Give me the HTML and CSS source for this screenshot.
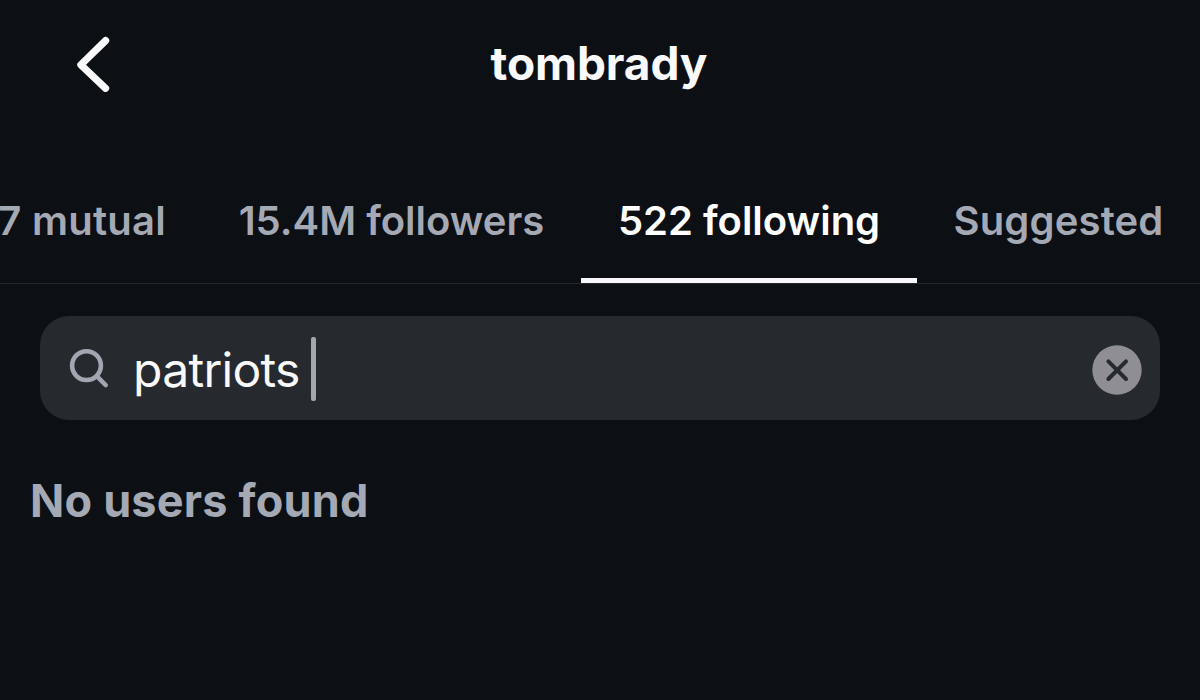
FILE: index.html
```html
<!DOCTYPE html>
<html lang="en">
<head>
<meta charset="utf-8">
<title>tombrady</title>
<link rel="stylesheet" href="styles.css">
</head>
<body>
<header class="header">
  <button class="back" aria-label="Back">
    <svg width="34" height="56" viewBox="0 0 34 56"><path d="M29.6 4.6 4.9 28.8 29.6 52.3" fill="none" stroke="currentColor" stroke-width="7.2" stroke-linecap="round" stroke-linejoin="round"/></svg>
  </button>
  <h1 class="title">tombrady</h1>
</header>
<nav class="tabs">
  <a class="tab tab-mutual">7 mutual</a>
  <a class="tab tab-followers">15.4M followers</a>
  <a class="tab tab-following active">522 following</a>
  <a class="tab tab-suggested">Suggested</a>
</nav>
<main>
  <div class="search">
    <svg class="search-icon" width="40" height="40" viewBox="0 0 40 40"><g fill="none" stroke="currentColor" stroke-width="4.6" stroke-linecap="round"><circle cx="17.5" cy="17.6" r="14.4"/><path d="M28 28.3 36.6 37"/></g></svg>
    <span class="query">patriots</span>
    <span class="caret"></span>
    <button class="clear" aria-label="Clear search">
      <svg width="50" height="50" viewBox="0 0 50 50"><circle cx="25" cy="25" r="24.7" fill="#8f8e94"/><path d="M16.4 16.4 34 34M34 16.4 16.4 34" stroke="#26292e" stroke-width="4" stroke-linecap="round"/></svg>
    </button>
  </div>
  <p class="empty">No users found</p>
</main>
</body>
</html>
```
FILE: styles.css
```css
* { box-sizing: border-box; }
body {
  margin: 0;
  width: 1200px;
  height: 700px;
  overflow: hidden;
  background: #0c0f14;
  color: #f9f9fb;
  font-family: Inter, "Liberation Sans", sans-serif;
}
button { padding: 0; border: 0; background: none; color: inherit; }
button svg { display: block; }
.header {
  display: grid;
  grid-template-columns: 200px 1fr 200px;
  align-items: center;
  height: 128px;
}
.back { justify-self: start; margin-left: 76px; }
.title {
  margin: 0 2px 2px 0;
  text-align: center;
  font-size: 46px;
  font-weight: 700;
  line-height: 60px;
  letter-spacing: -0.1px;
}
.tabs {
  display: flex;
  height: 156px;
  padding-top: 30px;
  border-bottom: 1px solid #24272c;
  color: #a5a9b4;
  font-size: 40px;
  font-weight: 600;
  line-height: 50px;
  white-space: nowrap;
}
.tab { display: flex; justify-content: center; padding-top: 38px; }
.tab-mutual { width: 202px; justify-content: flex-end; padding-right: 36px; letter-spacing: 0.25px; }
.tab-followers { width: 379px; }
.tab-following { width: 336px; }
.tab-suggested { width: 283px; letter-spacing: 0.15px; }
.active { color: #fff; border-bottom: 5px solid #f7f6fb; }
.search {
  display: flex;
  align-items: center;
  width: 1120px;
  height: 104px;
  margin: 32px 0 0 40px;
  padding: 0 18px 0 29px;
  border-radius: 29px;
  background: #26292e;
}
.search-icon { color: #a3a6b0; }
.query { margin: 4px 0 0 24px; font-size: 48px; line-height: 60px; letter-spacing: -0.7px; }
.caret { width: 5px; height: 64px; margin: 1px 0 0 11px; border-radius: 2px; background: #a4a7b2; }
.clear { margin: 4px 0 0 auto; }
.empty {
  margin: 51px 0 0 30px;
  color: #a5a9b4;
  font-size: 45px;
  font-weight: 700;
  line-height: 60px;
  letter-spacing: 0.2px;
}
```
